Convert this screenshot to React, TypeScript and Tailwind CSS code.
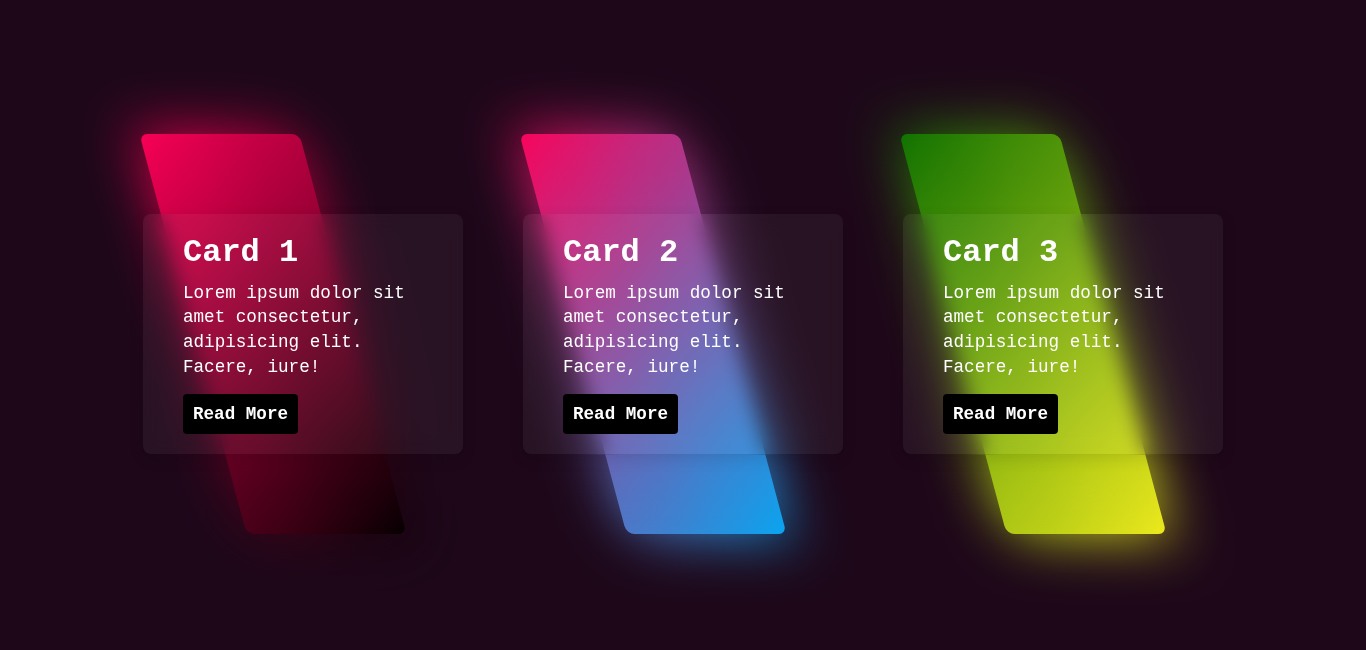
const cards = [
  {
    title: "Card 1",
    gradient: "bg-[linear-gradient(315deg,#000000,#ff0058)]",
  },
  {
    title: "Card 2",
    gradient: "bg-[linear-gradient(315deg,#03a9f4,#ff0058)]",
  },
  {
    title: "Card 3",
    gradient: "bg-[linear-gradient(315deg,#f2ec1e,#0b6f00)]",
  },
];

function GlowCard({ title, gradient }: { title: string; gradient: string }) {
  return (
    <div className="relative mx-[30px] flex h-[400px] w-[320px] items-center">
      {/* skewed shape + its blurred glow */}
      <div
        className={`absolute top-0 left-[50px] h-full w-1/2 skew-x-[15deg] rounded-lg ${gradient}`}
      />
      <div
        className={`absolute top-0 left-[50px] h-full w-1/2 skew-x-[15deg] rounded-lg blur-[30px] ${gradient}`}
      />

      <div className="relative z-10 w-full rounded-lg bg-white/5 px-10 py-5 text-white shadow-[0_5px_15px_rgba(0,0,0,0.1)] backdrop-blur-[10px]">
        <h2 className="mb-[10px] text-[32px] leading-[37px] font-bold">{title}</h2>
        <p className="mb-[15px] text-[17.6px] leading-[1.4em]">
          Lorem ipsum dolor sit amet consectetur, adipisicing elit. Facere, iure!
        </p>
        <a
          href="#"
          className="block w-fit rounded bg-black p-[10px] text-[17.6px] leading-[20px] font-bold text-white"
        >
          Read More
        </a>
      </div>
    </div>
  );
}

export default function App() {
  return (
    <div
      className="flex h-[650px] w-full justify-center overflow-hidden bg-[#1d0719] pt-[134px]"
      style={{ fontFamily: '"Liberation Mono", "Courier New", monospace' }}
    >
      {cards.map((c) => (
        <GlowCard key={c.title} title={c.title} gradient={c.gradient} />
      ))}
    </div>
  );
}
